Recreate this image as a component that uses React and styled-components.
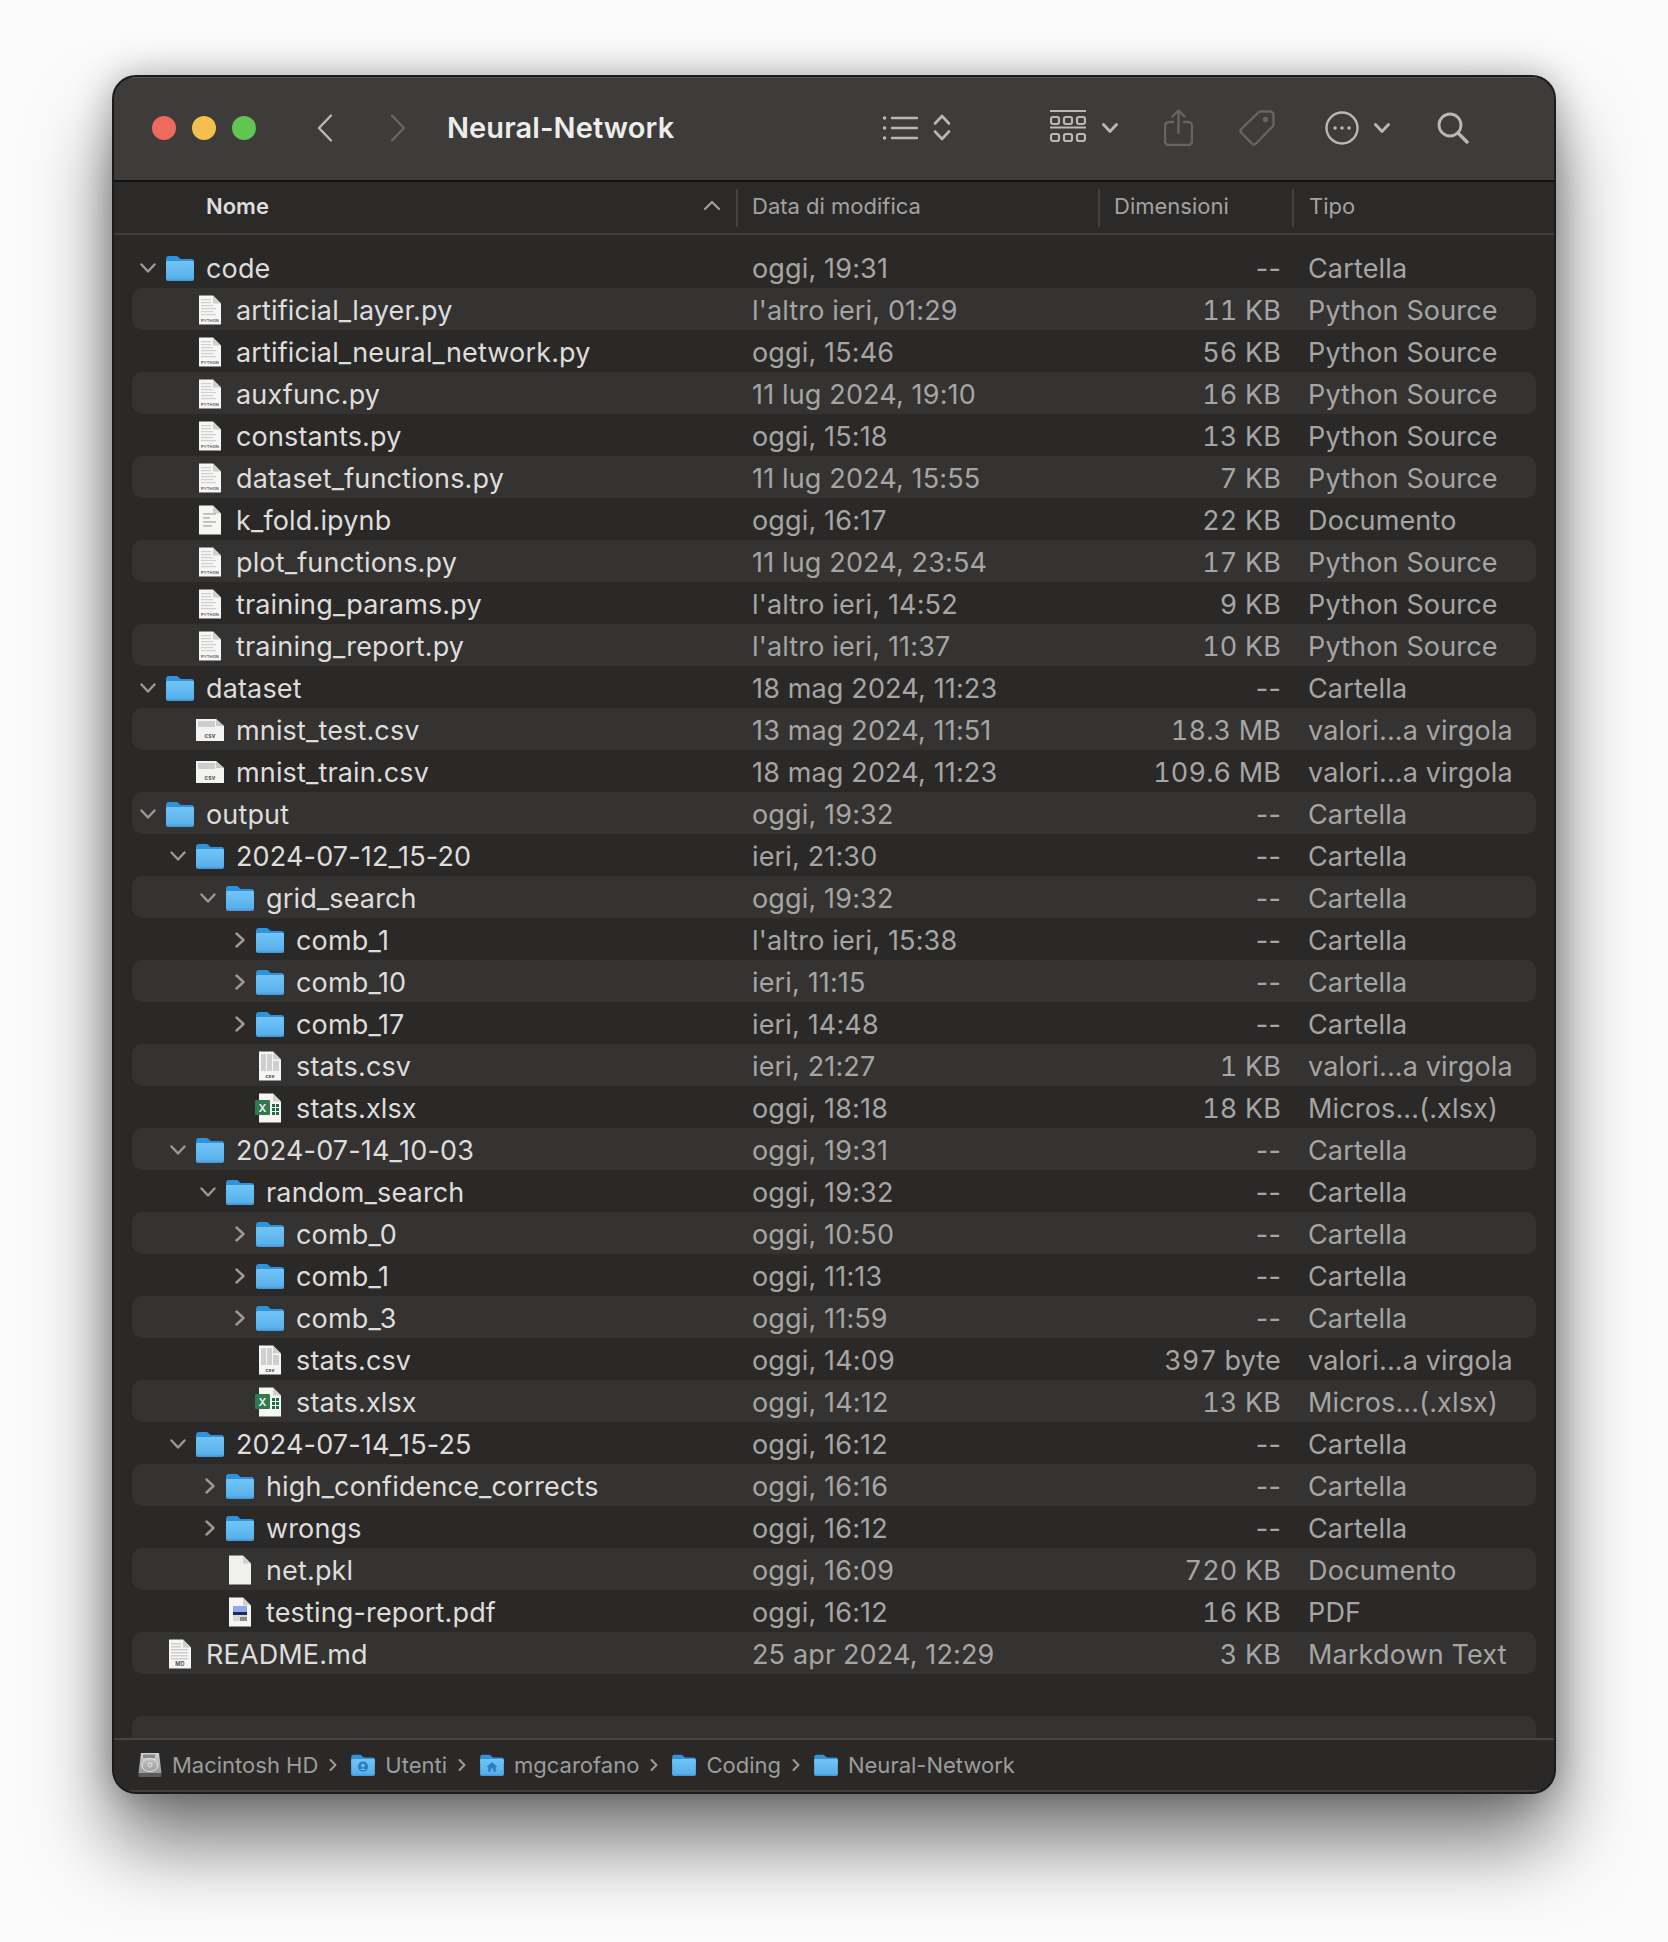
import styled, { createGlobalStyle } from 'styled-components';

const GlobalStyle = createGlobalStyle`
html, body {
  margin: 0;
  padding: 0;
  background: #fbfbfb;
}
`

const Page = styled.div`
width: 1668px;
height: 1942px;
box-sizing: border-box;
padding: 75px 0 0 112px;
overflow: hidden;
font-family: Inter, "Noto Sans", sans-serif;
`
const Window = styled.div`
width: 1444px;
height: 1719px;
box-sizing: border-box;
display: flex;
flex-direction: column;
overflow: hidden;
background: #2a2928;
border: 2px solid #1b1b1b;
border-radius: 24px;
box-shadow: 0 50px 80px rgba(0,0,0,0.52), 0 0 36px rgba(0,0,0,0.28);
`
const TitleBar = styled.div`
height: 103px;
flex: none;
box-sizing: border-box;
display: flex;
align-items: center;
padding: 0 0 2px 38px;
background: #3d3c3b;
box-shadow: inset 0 1px 0 #565554;
`
const Lights = styled.div`
display: flex;
gap: 16px;
`
const Light = styled.span`
width: 24px;
height: 24px;
border-radius: 50%;
background: ${p => p.$color};
`
const Title = styled.div`
width: 227px;
margin-left: 41px;
font-size: 29px;
font-weight: 600;
letter-spacing: 0.1px;
color: #ededec;
white-space: nowrap;
`
const Tool = styled.svg`
flex: none;
margin-left: ${p => p.$gap}px;
color: ${p => p.$dim ? '#666564' : '#b9b8b7'};
fill: none;
stroke: currentColor;
stroke-linecap: round;
stroke-linejoin: round;
`
const Header = styled.div`
height: 55px;
flex: none;
box-sizing: border-box;
display: grid;
grid-template-columns: 624px 362px 194px 1fr;
align-items: center;
border-top: 2px solid #131313;
border-bottom: 2px solid #3f3e3d;
background: #2b2a29;
`
const HeadCell = styled.div`
height: 38px;
box-sizing: border-box;
display: flex;
align-items: center;
justify-content: space-between;
padding-left: ${p => p.$first ? '92px' : p.$last ? '15px' : '14px'};
padding-right: 16px;
padding-bottom: 4px;
border-right: ${p => p.$last ? 'none' : '2px solid #43423f'};
font-size: 22px;
font-weight: ${p => p.$first ? 600 : 400};
color: ${p => p.$first ? '#dedddc' : '#a3a2a1'};
`
const List = styled.div`
flex: 1;
min-height: 0;
padding-top: 11px;
overflow: hidden;
`
const Row = styled.div`
height: 42px;
margin: 0 18px;
display: grid;
grid-template-columns: 620px 340px 189px 1fr;
align-items: center;
border-radius: 10px;
background: ${p => p.$striped ? '#343332' : 'transparent'};
font-size: 27px;
letter-spacing: 0.15px;
line-height: 42px;
white-space: nowrap;
`
const Spacer = styled(Row)`
margin-top: 42px;
border-radius: 10px 10px 0 0;
`
const NameCell = styled.div`
display: flex;
align-items: center;
padding-left: ${p => p.$depth * 30}px;
color: #dedddc;
`
const Arrow = styled.div`
width: 32px;
margin-right: 2px;
height: 42px;
flex: none;
display: flex;
align-items: center;
justify-content: center;
`
const IconSlot = styled.div`
width: 28px;
height: 42px;
flex: none;
display: flex;
align-items: center;
justify-content: center;
margin-right: 12px;
`
const Name = styled.span`
padding-top: 2px;
`
const Cell = styled.div`
padding-top: 2px;
color: #a6a5a4;
`
const SizeCell = styled(Cell)`
text-align: right;
font-variant-numeric: ${p => p.$dash ? 'normal' : 'tabular-nums'};
`
const TypeCell = styled(Cell)`
padding-left: 27px;
`
const StatusBar = styled.div`
height: 54px;
flex: none;
box-sizing: border-box;
display: flex;
align-items: center;
padding-left: 24px;
border-top: 2px solid #454443;
border-bottom: 2px solid #403f3e;
background: #2a2928;
font-size: 22px;
color: #9d9c9b;
`
const Crumb = styled.div`
display: flex;
align-items: center;
gap: 10px;
`
const Sep = styled.svg`
flex: none;
margin: 0 14px 0 11px;
fill: none;
stroke: #9d9c9b;
stroke-width: 2;
stroke-linecap: round;
stroke-linejoin: round;
`
const RightChevron = styled.svg`
margin-left: 3px;
fill: none;
stroke: #9a9998;
stroke-width: 2.4;
stroke-linecap: round;
stroke-linejoin: round;
`

const rows = [
  [0, 'open', 'code', 'oggi, 19:31', '--', 'Cartella'],
  [1, 'py', 'artificial_layer.py', "l'altro ieri, 01:29", '11 KB', 'Python Source'],
  [1, 'py', 'artificial_neural_network.py', 'oggi, 15:46', '56 KB', 'Python Source'],
  [1, 'py', 'auxfunc.py', '11 lug 2024, 19:10', '16 KB', 'Python Source'],
  [1, 'py', 'constants.py', 'oggi, 15:18', '13 KB', 'Python Source'],
  [1, 'py', 'dataset_functions.py', '11 lug 2024, 15:55', '7 KB', 'Python Source'],
  [1, 'doc', 'k_fold.ipynb', 'oggi, 16:17', '22 KB', 'Documento'],
  [1, 'py', 'plot_functions.py', '11 lug 2024, 23:54', '17 KB', 'Python Source'],
  [1, 'py', 'training_params.py', "l'altro ieri, 14:52", '9 KB', 'Python Source'],
  [1, 'py', 'training_report.py', "l'altro ieri, 11:37", '10 KB', 'Python Source'],
  [0, 'open', 'dataset', '18 mag 2024, 11:23', '--', 'Cartella'],
  [1, 'csvwide', 'mnist_test.csv', '13 mag 2024, 11:51', '18.3 MB', 'valori...a virgola'],
  [1, 'csvwide', 'mnist_train.csv', '18 mag 2024, 11:23', '109.6 MB', 'valori...a virgola'],
  [0, 'open', 'output', 'oggi, 19:32', '--', 'Cartella'],
  [1, 'open', '2024-07-12_15-20', 'ieri, 21:30', '--', 'Cartella'],
  [2, 'open', 'grid_search', 'oggi, 19:32', '--', 'Cartella'],
  [3, 'closed', 'comb_1', "l'altro ieri, 15:38", '--', 'Cartella'],
  [3, 'closed', 'comb_10', 'ieri, 11:15', '--', 'Cartella'],
  [3, 'closed', 'comb_17', 'ieri, 14:48', '--', 'Cartella'],
  [3, 'csv', 'stats.csv', 'ieri, 21:27', '1 KB', 'valori...a virgola'],
  [3, 'xlsx', 'stats.xlsx', 'oggi, 18:18', '18 KB', 'Micros...(.xlsx)'],
  [1, 'open', '2024-07-14_10-03', 'oggi, 19:31', '--', 'Cartella'],
  [2, 'open', 'random_search', 'oggi, 19:32', '--', 'Cartella'],
  [3, 'closed', 'comb_0', 'oggi, 10:50', '--', 'Cartella'],
  [3, 'closed', 'comb_1', 'oggi, 11:13', '--', 'Cartella'],
  [3, 'closed', 'comb_3', 'oggi, 11:59', '--', 'Cartella'],
  [3, 'csv', 'stats.csv', 'oggi, 14:09', '397 byte', 'valori...a virgola'],
  [3, 'xlsx', 'stats.xlsx', 'oggi, 14:12', '13 KB', 'Micros...(.xlsx)'],
  [1, 'open', '2024-07-14_15-25', 'oggi, 16:12', '--', 'Cartella'],
  [2, 'closed', 'high_confidence_corrects', 'oggi, 16:16', '--', 'Cartella'],
  [2, 'closed', 'wrongs', 'oggi, 16:12', '--', 'Cartella'],
  [2, 'blank', 'net.pkl', 'oggi, 16:09', '720 KB', 'Documento'],
  [2, 'pdf', 'testing-report.pdf', 'oggi, 16:12', '16 KB', 'PDF'],
  [0, 'md', 'README.md', '25 apr 2024, 12:29', '3 KB', 'Markdown Text'],
];

const Folder = ({ width = 28, height = 26, badge }) => (
  <svg width={width} height={height} viewBox="0 0 28 26">
    <defs>
      <linearGradient id="folderBody" x1="0" y1="0" x2="0" y2="1">
        <stop offset="0" stopColor="#72c4f6" />
        <stop offset="0.85" stopColor="#58b1ec" />
        <stop offset="1" stopColor="#3f97d8" />
      </linearGradient>
    </defs>
    <path d="M0 4a3 3 0 0 1 3-3h7c1.500 0 2 .5 3 1.500S14.500 4 16 4h9.500A2.500 2.500 0 0 1 28 6.500V12H0Z" fill="#2f92dc" />
    <path d="M0 7.500C0 6.500.7 6 1.700 6h24.600c1 0 1.700.5 1.700 1.500V24a2 2 0 0 1-2 2H2a2 2 0 0 1-2-2Z" fill="url(#folderBody)" />
    {badge === 'user' && (
      <g fill="#2a7fc0">
        <circle cx="14" cy="15" r="6" />
        <circle cx="14" cy="13.600" r="2" fill="#7cc5f2" />
        <path d="M10.800 19c.5-2.200 5.900-2.200 6.400 0Z" fill="#7cc5f2" />
      </g>
    )}
    {badge === 'home' && (
      <path d="M14 9.500l6.500 6h-2V21h-3v-4h-3v4h-3v-5.500h-2Z" fill="#2a7fc0" />
    )}
  </svg>
);

const lineRows = [4, 7, 10, 13, 16, 19];

const FileIcon = ({ kind }) => {
  if (kind === 'csvwide') {
    return (
      <svg width="28" height="30" viewBox="0 0 28 30">
        <path d="M0 4h20l8 7v15H0Z" fill="#f3f3f2" />
        <path d="M20 4v7h8Z" fill="#c9c9c8" />
        <rect x="2" y="6" width="17" height="6" fill="#cdcdcd" />
        <text x="14" y="23" textAnchor="middle" fontSize="6" fontWeight="700" fill="#555" fontFamily="Inter">csv</text>
      </svg>
    );
  }
  return (
    <svg width="28" height="30" viewBox="0 0 28 30" overflow="visible">
      <path d="M3 .5h14l8 8v21H3Z" fill={kind === 'blank' ? '#f0f0ef' : '#f6f6f5'} />
      <path d="M17 .5v8h8Z" fill="#cfcfce" />
      {kind === 'py' && (
        <>
          {lineRows.map(y => (
            <rect key={y} x="5" y={y} width={y < 8 ? 10 : y % 2 ? 15 : 12} height="1.200" fill="#d0d0d0" />
          ))}
          <text x="14" y="27" textAnchor="middle" fontSize="4" fontWeight="600" fill="#555" fontFamily="Inter">PYTHON</text>
        </>
      )}
      {kind === 'doc' && (
        <>
          <rect x="7" y="8" width="13" height="1.800" fill="#bdbdbd" />
          <rect x="7" y="12" width="7" height="1.800" fill="#bdbdbd" />
          <rect x="7" y="16" width="13" height="1.800" fill="#bdbdbd" />
          <rect x="7" y="20" width="9" height="1.800" fill="#bdbdbd" />
        </>
      )}
      {kind === 'csv' && (
        <>
          <rect x="5" y="3" width="5" height="17" fill="#cfcfcf" />
          <rect x="11" y="3" width="5" height="17" fill="#cfcfcf" />
          <rect x="17" y="10" width="6" height="10" fill="#cfcfcf" />
          <text x="14" y="27" textAnchor="middle" fontSize="5" fontWeight="700" fill="#444" fontFamily="Inter">csv</text>
        </>
      )}
      {kind === 'md' && (
        <>
          {lineRows.map(y => (
            <rect key={y} x="5" y={y} width={y < 8 ? 10 : 17} height="1.500" fill="#cdcdcd" />
          ))}
          <text x="14" y="27" textAnchor="middle" fontSize="5.500" fontWeight="600" fill="#444" fontFamily="Inter">MD</text>
        </>
      )}
      {kind === 'pdf' && (
        <>
          <rect x="7" y="9" width="14" height="6" fill="#8fa8ee" />
          <rect x="7" y="15" width="14" height="3" fill="#1f2c55" />
          <rect x="7" y="18" width="14" height="6" fill="#d8d8d8" />
          <rect x="14" y="20" width="7" height="4" fill="#8a8a8a" />
        </>
      )}
      {kind === 'xlsx' && (
        <>
          <g fill="#1f6b43">
            {[13, 17, 21].map(y => [16, 20].map(x => (
              <rect key={`${x}-${y}`} x={x} y={y - 2} width="3" height="3" />
            )))}
          </g>
          <rect x="-1" y="7" width="15" height="15" rx="1" fill="#2f7a4f" />
          <text x="6.500" y="19" textAnchor="middle" fontSize="11" fontWeight="600" fill="#f2f2f2" fontFamily="Inter">X</text>
        </>
      )}
    </svg>
  );
};

const Chevron = ({ open }) => open ? (
  <svg width="16" height="10" viewBox="0 0 16 10" fill="none" stroke="#9a9998" strokeWidth="2.400" strokeLinecap="round" strokeLinejoin="round">
    <path d="M1.500 1.500L8 8.500l6.500-7" />
  </svg>
) : (
  <RightChevron width="10" height="16" viewBox="0 0 10 16">
    <path d="M1.500 1.500L8.500 8l-7 6.500" />
  </RightChevron>
);

const HardDisk = () => (
  <svg width="24" height="26" viewBox="0 0 24 26">
    <defs>
      <linearGradient id="diskBody" x1="0" y1="0" x2="0" y2="1">
        <stop offset="0" stopColor="#d2d2d2" />
        <stop offset="1" stopColor="#9a9a9a" />
      </linearGradient>
    </defs>
    <path d="M3 1h18l2.500 20H.5Z" fill="url(#diskBody)" />
    <rect x="5" y="2.500" width="12" height="3.500" fill="#8a8a8a" />
    <ellipse cx="12" cy="13" rx="8" ry="6.500" fill="none" stroke="#e4e4e4" strokeWidth="1" />
    <circle cx="12" cy="13" r="2" fill="none" stroke="#e4e4e4" strokeWidth="1" />
    <rect x=".5" y="21" width="23" height="4" rx="1" fill="#5c5c5c" />
  </svg>
);

const Separator = () => (
  <Sep width="8" height="14" viewBox="0 0 8 14">
    <path d="M1.500 2L6.500 7l-5 5" />
  </Sep>
);

const SmallFolder = ({ badge }) => <Folder width={24} height={22} badge={badge} />;

const App = () => {
  return (
    <Page>
      <GlobalStyle />
      <Window>
        <TitleBar>
          <Lights>
            <Light $color="#ed6a5e" />
            <Light $color="#f5bf4f" />
            <Light $color="#61c554" />
          </Lights>
          <Tool $gap={61} width="16" height="28" viewBox="0 0 16 28" strokeWidth="2.400">
            <path d="M14 1.500L2 14l12 12.500" />
          </Tool>
          <Tool $gap={57} $dim width="16" height="28" viewBox="0 0 16 28" strokeWidth="2.400">
            <path d="M2 1.500L14 14 2 26.500" />
          </Tool>
          <Title>Neural-Network</Title>
          <Tool $gap={209} width="35" height="24" viewBox="0 0 35 24" strokeWidth="2.400">
            <path d="M9 2h25M9 12h25M9 22h25" />
            <path d="M1.500 2h.1M1.500 12h.1M1.500 22h.1" strokeWidth="3.400" />
          </Tool>
          <Tool $gap={15} width="18" height="27" viewBox="0 0 18 27" strokeWidth="2.600">
            <path d="M2 9.500L9 2l7 7.500M2 17.500L9 25l7-7.500" />
          </Tool>
          <Tool $gap={99} width="36" height="35" viewBox="0 0 36 35" strokeWidth="2.200">
            <path d="M0 1h36M0 17.500h36" />
            <rect x="1" y="7" width="8" height="7" rx="2" />
            <rect x="14" y="7" width="8" height="7" rx="2" />
            <rect x="27" y="7" width="8" height="7" rx="2" />
            <rect x="1" y="24" width="8" height="7" rx="2" />
            <rect x="14" y="24" width="8" height="7" rx="2" />
            <rect x="27" y="24" width="8" height="7" rx="2" />
          </Tool>
          <Tool $gap={16} width="16" height="10" viewBox="0 0 16 10" strokeWidth="2.800">
            <path d="M1.500 1.500L8 8.500l6.500-7" />
          </Tool>
          <Tool $gap={46} $dim width="29" height="37" viewBox="0 0 29 37" strokeWidth="2.400">
            <path d="M14.500 24V2M8.500 7.500l6-6 6 6" />
            <path d="M9 13H5a4 4 0 0 0-4 4v15a4 4 0 0 0 4 4h19a4 4 0 0 0 4-4V17a4 4 0 0 0-4-4h-4" />
          </Tool>
          <Tool $gap={46} $dim width="36" height="36" viewBox="0 0 36 36" strokeWidth="2.400">
            <path d="M22 1.500h9a3.500 3.500 0 0 1 3.500 3.500v9a4 4 0 0 1-1.200 2.800L17 33.500a3 3 0 0 1-4.200 0L2.500 23a3 3 0 0 1 0-4.200L19.200 2.700A4 4 0 0 1 22 1.500Z" />
            <circle cx="26.500" cy="9.500" r="1.500" fill="currentColor" />
          </Tool>
          <Tool $gap={50} width="34" height="34" viewBox="0 0 34 34" strokeWidth="2.400">
            <circle cx="17" cy="17" r="15.500" />
            <path d="M10 17h.1M17 17h.1M24 17h.1" strokeWidth="3.400" />
          </Tool>
          <Tool $gap={15} width="16" height="10" viewBox="0 0 16 10" strokeWidth="2.800">
            <path d="M1.500 1.500L8 8.500l6.500-7" />
          </Tool>
          <Tool $gap={47} width="32" height="32" viewBox="0 0 32 32" strokeWidth="2.800">
            <circle cx="13" cy="13" r="11" />
            <path d="M21 21l9 9" strokeWidth="3.400" />
          </Tool>
        </TitleBar>
        <Header>
          <HeadCell $first>
            <span>Nome</span>
            <svg width="16" height="9" viewBox="0 0 16 9" fill="none" stroke="#a3a2a1" strokeWidth="2" strokeLinecap="round" strokeLinejoin="round">
              <path d="M1 8l7-7 7 7" />
            </svg>
          </HeadCell>
          <HeadCell>Data di modifica</HeadCell>
          <HeadCell>Dimensioni</HeadCell>
          <HeadCell $last>Tipo</HeadCell>
        </Header>
        <List>
          {rows.map(([depth, kind, name, date, size, type], i) => (
            <Row key={i} $striped={i % 2 === 1}>
              <NameCell $depth={depth}>
                <Arrow>
                  {kind === 'open' && <Chevron open />}
                  {kind === 'closed' && <Chevron />}
                </Arrow>
                <IconSlot>
                  {kind === 'open' || kind === 'closed' ? <Folder /> : <FileIcon kind={kind} />}
                </IconSlot>
                <Name>{name}</Name>
              </NameCell>
              <Cell>{date}</Cell>
              <SizeCell $dash={size === '--'}>{size}</SizeCell>
              <TypeCell>{type}</TypeCell>
            </Row>
          ))}
          <Spacer $striped />
        </List>
        <StatusBar>
          <Crumb><HardDisk />Macintosh HD</Crumb>
          <Separator />
          <Crumb><SmallFolder badge="user" />Utenti</Crumb>
          <Separator />
          <Crumb><SmallFolder badge="home" />mgcarofano</Crumb>
          <Separator />
          <Crumb><SmallFolder />Coding</Crumb>
          <Separator />
          <Crumb><SmallFolder />Neural-Network</Crumb>
        </StatusBar>
      </Window>
    </Page>
  );
}

export default App;
